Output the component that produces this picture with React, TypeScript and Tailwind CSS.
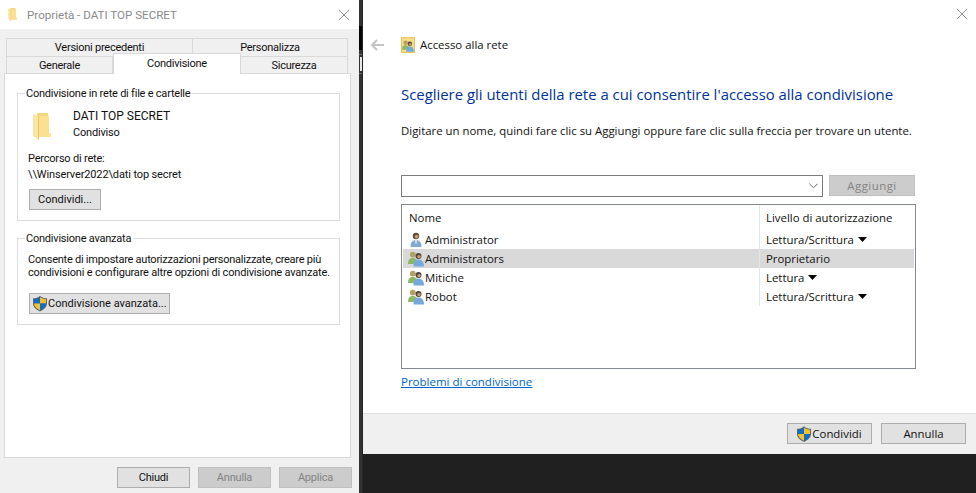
import React from "react";

function Folder({ className }: { className?: string }) {
  return (
    <svg viewBox="0 0 18 27" className={className}>
      <path d="M4 0H15L15 3H16V20H18V24H4Z" fill="#f2d77e" />
      <path d="M6 3H16V20H18V24H6Z" fill="#fbe08f" />
      <path d="M0 1L6 3V27L0 23Z" fill="#f9e6a5" />
      <path d="M6 3V27L5 26.5V3Z" fill="#e8c873" />
    </svg>
  );
}

function Shield({ className }: { className?: string }) {
  return (
    <svg viewBox="0 0 16 18" className={className}>
      <path d="M8 0C6 2 3 3 0 3V9C0 13 4 16.5 8 18C12 16.5 16 13 16 9V3C13 3 10 2 8 0Z" fill="#5a6472" />
      <path d="M8 1.5V9H1.2V4C4 4 6.3 3 8 1.5Z" fill="#0d6fc4" />
      <path d="M8 1.5C9.7 3 12 4 14.8 4V9H8Z" fill="#f5c02c" />
      <path d="M1.2 9H8V16.6C4.6 15.2 1.2 12.4 1.2 9Z" fill="#f5c02c" />
      <path d="M8 9H14.8C14.8 12.4 11.4 15.2 8 16.6Z" fill="#0d6fc4" />
    </svg>
  );
}

function User() {
  return (
    <svg viewBox="0 0 16 16" className="w-4 h-4 shrink-0">
      <circle cx="8" cy="4" r="3.2" fill="#5f4a3c" />
      <circle cx="8.6" cy="4.6" r="1.9" fill="#c49a78" />
      <path d="M2.5 15C2.5 10 5 8 8 8S13.5 10 13.5 15Z" fill="#7fa9d2" />
      <path d="M7 8H9L8.5 12H7.5Z" fill="#e3ebf2" />
    </svg>
  );
}

function Group({ className = "w-4 h-4" }: { className?: string }) {
  return (
    <svg viewBox="0 0 16 16" className={`${className} shrink-0`}>
      <circle cx="4.8" cy="3.6" r="2.9" fill="#b3a064" />
      <path d="M0 13C0 8.5 2 7 4.8 7S9.5 8.5 9.5 13Z" fill="#8cb866" />
      <circle cx="10.5" cy="5" r="3" fill="#4f463d" />
      <circle cx="11" cy="5.6" r="1.7" fill="#c69c7a" />
      <path d="M5.5 15.5C5.5 11 7.5 8.6 10.5 8.6S16 11 16 15.5Z" fill="#75a8dc" />
    </svg>
  );
}

function Btn({ className = "", disabled, children }: { className?: string; disabled?: boolean; children: React.ReactNode }) {
  return (
    <div
      className={`h-[21px] border flex items-center justify-center whitespace-nowrap ${
        disabled ? "bg-[#cccccc] border-[#bfbfbf] text-[#838383]" : "bg-[#e1e1e1] border-[#adadad] text-[#111111]"
      } ${className}`}
    >
      {children}
    </div>
  );
}

function Tab({ className = "", children }: { className?: string; children: React.ReactNode }) {
  return (
    <div className={`h-[18px] bg-[#f0f0f0] border border-b-0 border-[#d9d9d9] flex items-center justify-center pt-px tracking-[-0.25px] ${className}`}>
      {children}
    </div>
  );
}

function Legend({ children }: { children: React.ReactNode }) {
  return <div className="h-[12px] -mt-[6px] ml-[7px] pl-px pr-[2px] bg-white w-fit flex items-center whitespace-nowrap tracking-[-0.22px]">{children}</div>;
}

const rows = [
  { name: "Administrator", perm: "Lettura/Scrittura", icon: "user", arrow: true },
  { name: "Administrators", perm: "Proprietario", icon: "group", arrow: false, sel: true },
  { name: "Mitiche", perm: "Lettura", icon: "group", arrow: true },
  { name: "Robot", perm: "Lettura/Scrittura", icon: "group", arrow: true },
];

export default function App() {
  return (
    <div className="w-[976px] h-[493px] flex overflow-hidden bg-[#1d1d1d] text-[#111111] leading-[14px]">
      <div className="w-[359px] h-full bg-[#f0f0f0] shrink-0 flex flex-col font-['Roboto',sans-serif] text-[11px]">
        <div className="h-[29px] bg-white flex items-center pl-[8px] pr-[10px] shrink-0">
          <Folder className="w-[9px] h-[13px] mr-[10px]" />
          <span className="text-[#8a8a8a] text-[11.6px]">Proprietà - DATI TOP SECRET</span>
          <svg viewBox="0 0 10 10" className="w-[10px] h-[10px] ml-auto">
            <path d="M0 0L10 10M10 0L0 10" stroke="#8f8f8f" strokeWidth="1" />
          </svg>
        </div>
        <div className="pt-[9px] pl-[6px] flex flex-col">
          <div className="flex">
            <Tab className="w-[187px]">Versioni precedenti</Tab>
            <Tab className="w-[155px] border-l-0">Personalizza</Tab>
          </div>
          <div className="flex h-[18px] items-end">
            <Tab className="w-[107px]">Generale</Tab>
            <div className="w-[128px] h-[21px] -mt-[3px] bg-white border border-b-0 border-[#d9d9d9] z-10 flex items-start justify-center pt-[3px] tracking-[-0.25px]">
              Condivisione
            </div>
            <Tab className="w-[107px] border-l-0">Sicurezza</Tab>
          </div>
        </div>
        <div className="ml-[4px] w-[347px] h-[385px] bg-white border border-[#d9d9d9] -mt-px pt-[19px] pl-[12px]">
          <div className="w-[323px] h-[128px] border border-[#dcdcdc]">
            <Legend>Condivisione in rete di file e cartelle</Legend>
            <div className="flex pl-[15px] pt-[9px]">
              <Folder className="w-[18px] h-[27px] mt-[4px]" />
              <div className="ml-[22px] flex flex-col">
                <span className="h-[17px] text-[12px]">DATI TOP SECRET</span>
                <span className="h-[15px] tracking-[-0.2px]">Condiviso</span>
              </div>
            </div>
            <div className="pl-[10px] mt-[11px] flex flex-col">
              <span className="h-[16px] tracking-[-0.2px]">Percorso di rete:</span>
              <span className="h-[16px] tracking-[-0.13px]">\\Winserver2022\dati top secret</span>
            </div>
            <Btn className="w-[72px] ml-[11px] mt-[5px]">Condividi...</Btn>
          </div>
          <div className="w-[323px] h-[87px] border border-[#dcdcdc] mt-[17px]">
            <Legend>Condivisione avanzata</Legend>
            <div className="pl-[10px] pt-[8px] leading-[13px] whitespace-nowrap">
              <div className="tracking-[-0.25px]">Consente di impostare autorizzazioni personalizzate, creare più</div>
              <div className="tracking-[-0.18px]">condivisioni e configurare altre opzioni di condivisione avanzate.</div>
            </div>
            <Btn className="w-[141px] ml-[11px] mt-[14px] justify-start pl-[3px]">
              <Shield className="w-[14px] h-[17px] mr-px" />
              Condivisione avanzata...
            </Btn>
          </div>
        </div>
        <div className="flex pl-[117px] gap-2 mt-[9px] tracking-[-0.2px]">
          <Btn className="w-[73px]">Chiudi</Btn>
          <Btn className="w-[73px]" disabled>Annulla</Btn>
          <Btn className="w-[73px]" disabled>Applica</Btn>
        </div>
      </div>

      <div className="w-[4px] shrink-0 flex flex-col bg-[#333333] border-r border-[#262626]">
        <div className="h-[26px] shrink-0" />
        <div className="h-[24px] shrink-0 bg-[#050505]" />
        <div className="h-[5px] shrink-0 border-b border-[#6a6a6a]" />
        <div className="h-[19px] shrink-0 border-b border-[#6a6a6a] pl-px pt-[2px]">
          <div className="w-[2px] h-[14px] bg-[#e8e8e8]" />
        </div>
      </div>

      <div className="flex-1 flex flex-col font-['Open_Sans',sans-serif] text-[11.4px]">
        <div className="h-[413px] bg-white pl-[38px] flex flex-col relative">
          <svg viewBox="0 0 10 10" className="absolute right-[9px] top-[9px] w-[10px] h-[10px]">
            <path d="M0 0L10 10M10 0L0 10" stroke="#8f8f8f" strokeWidth="1" />
          </svg>
          <div className="h-[16px] mt-[37px] flex items-center -ml-[30px]">
            <svg viewBox="0 0 14 12" className="w-[14px] h-[12px]">
              <path d="M6 1L1 6L6 11M1 6H13" fill="none" stroke="#c4c4c4" strokeWidth="2" />
            </svg>
            <div className="ml-[16px] w-[14px] h-[16px] bg-[#f6dc84] border border-[#e5c55c] flex items-end overflow-hidden">
              <Group className="w-[12px] h-[12px]" />
            </div>
            <span className="ml-[5px]">Accesso alla rete</span>
          </div>
          <div className="mt-[31px] h-[20px] text-[14.9px] leading-[20px] text-[#003399] whitespace-nowrap">
            Scegliere gli utenti della rete a cui consentire l'accesso alla condivisione
          </div>
          <div className="mt-[20px] h-[14px] whitespace-nowrap">
            Digitare un nome, quindi fare clic su Aggiungi oppure fare clic sulla freccia per trovare un utente.
          </div>
          <div className="mt-[37px] flex">
            <div className="w-[422px] h-[22px] border border-[#7a7a7a] flex items-center justify-end pr-[4px]">
              <svg viewBox="0 0 10 6" className="w-[9px] h-[6px]">
                <path d="M0.5 0.5L5 5L9.5 0.5" fill="none" stroke="#555555" />
              </svg>
            </div>
            <Btn className="w-[86px] ml-[6px] tracking-[0.5px]" disabled>Aggiungi</Btn>
          </div>
          <div className="mt-[7px] w-[515px] h-[165px] border border-[#828790] pl-px pr-px">
            <div className="h-[25px] flex items-center">
              <div className="w-[356px] pl-[6px]">Nome</div>
              <div className="h-full border-l border-[#e5e5e5] pl-[6px] flex items-center">Livello di autorizzazione</div>
            </div>
            {rows.map((r) => (
              <div key={r.name} className={`h-[19px] flex items-center ${r.sel ? "bg-[#d9d9d9]" : ""}`}>
                <div className="w-[356px] flex items-center pl-[5px]">
                  {r.icon === "user" ? <User /> : <Group />}
                  <span className="ml-[1px]">{r.name}</span>
                </div>
                <div className="h-full border-l border-[#e5e5e5] pl-[6px] flex items-center">
                  {r.perm}
                  {r.arrow && (
                    <svg viewBox="0 0 9 5" className="w-[9px] h-[5px] ml-[4px]">
                      <path d="M0 0H9L4.5 5Z" fill="#000000" />
                    </svg>
                  )}
                </div>
              </div>
            ))}
          </div>
          <div className="mt-[6px] h-[14px] text-[11.5px] text-[#0066cc] underline">Problemi di condivisione</div>
        </div>
        <div className="h-[41px] bg-[#f0f0f0] border-t border-[#dfdfdf] flex items-start justify-end pt-[9px] pr-[10px] gap-[9px]">
          <Btn className="w-[85px]">
            <Shield className="w-[14px] h-[16px] mr-px" />
            Condividi
          </Btn>
          <Btn className="w-[85px]">Annulla</Btn>
        </div>
        <div className="flex-1 bg-[#202020]" />
      </div>
    </div>
  );
}
